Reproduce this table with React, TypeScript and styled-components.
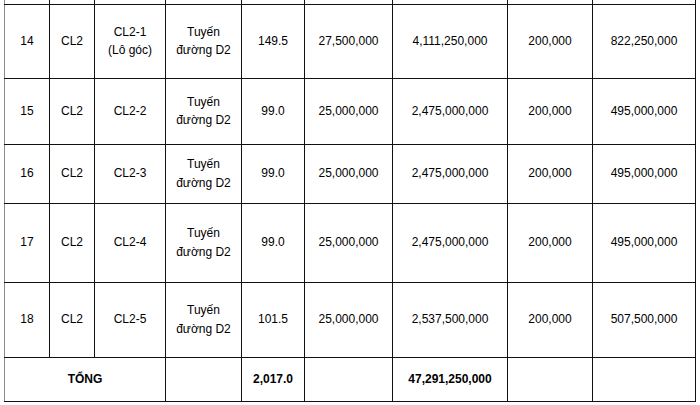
import React from "react";
import styled, { createGlobalStyle } from "styled-components";

const Global = createGlobalStyle`
  html, body { margin: 0; padding: 0; background: #fff; }
  body { font-family: "Liberation Sans", Arial, sans-serif; color: #000; }
`;

const Page = styled.div`
  padding: 0 0 0 4px;
  width: 700px;
  height: 405px;
  overflow: hidden;
  box-sizing: border-box;
`;

const Table = styled.table`
  border-collapse: collapse;
  table-layout: fixed;
  width: 692px;
  font-size: 12px;
  line-height: 18.5px;
`;

const Cell = styled.td<{ $bold?: boolean; $soft?: boolean }>`
  border: 1px solid #111;
  border-left-color: ${(p) => (p.$soft ? "#8c8c8c" : "#111")};
  text-align: center;
  vertical-align: middle;
  padding: 0 4px;
  font-weight: ${(p) => (p.$bold ? 700 : 400)};
  white-space: nowrap;
`;

const Row = styled.tr<{ $h: number; $softTop?: boolean }>`
  height: ${(p) => p.$h}px;
  & > td { border-top-color: ${(p) => (p.$softTop ? "#8c8c8c" : "#111")}; }
`;

const CutRow = styled.tr`
  height: 4px;
  & > td { border-top: none; padding: 0; line-height: 0; }
`;

const widths = [45, 45, 71, 76, 63, 88, 115, 85, 103];
const soft = [true, false, false, true, false, true, true, false, true];

type R = { h: number; c: string[]; softTop?: boolean };
const rows: R[] = [
  { h: 74, c: ["14", "CL2", "CL2-1\n(Lô góc)", "Tuyến\nđường D2", "149.5", "27,500,000", "4,111,250,000", "200,000", "822,250,000"] },
  { h: 66, c: ["15", "CL2", "CL2-2", "Tuyến\nđường D2", "99.0", "25,000,000", "2,475,000,000", "200,000", "495,000,000"] },
  { h: 59, c: ["16", "CL2", "CL2-3", "Tuyến\nđường D2", "99.0", "25,000,000", "2,475,000,000", "200,000", "495,000,000"] },
  { h: 79, c: ["17", "CL2", "CL2-4", "Tuyến\nđường D2", "99.0", "25,000,000", "2,475,000,000", "200,000", "495,000,000"] },
  { h: 75, softTop: true, c: ["18", "CL2", "CL2-5", "Tuyến\nđường D2", "101.5", "25,000,000", "2,537,500,000", "200,000", "507,500,000"] },
];

const Lines = ({ t }: { t: string }) => (
  <>
    {t.split("\n").map((l, i) => (
      <React.Fragment key={i}>
        {i > 0 && <br />}
        {l}
      </React.Fragment>
    ))}
  </>
);

export default function App() {
  return (
    <Page>
      <Global />
      <Table>
        <colgroup>
          {widths.map((w, i) => (
            <col key={i} style={{ width: w }} />
          ))}
        </colgroup>
        <tbody>
          <CutRow>
            {widths.map((_, i) => (
              <Cell key={i} $soft={soft[i]} />
            ))}
          </CutRow>
          {rows.map((r, ri) => (
            <Row key={ri} $h={r.h} $softTop={r.softTop}>
              {r.c.map((t, i) => (
                <Cell key={i} $soft={soft[i]}>
                  <Lines t={t} />
                </Cell>
              ))}
            </Row>
          ))}
          <Row $h={44} $softTop>
            <Cell colSpan={3} $bold $soft>TỔNG</Cell>
            <Cell $soft />
            <Cell $bold>2,017.0</Cell>
            <Cell $soft />
            <Cell $bold $soft>47,291,250,000</Cell>
            <Cell />
            <Cell $soft />
          </Row>
        </tbody>
      </Table>
    </Page>
  );
}
